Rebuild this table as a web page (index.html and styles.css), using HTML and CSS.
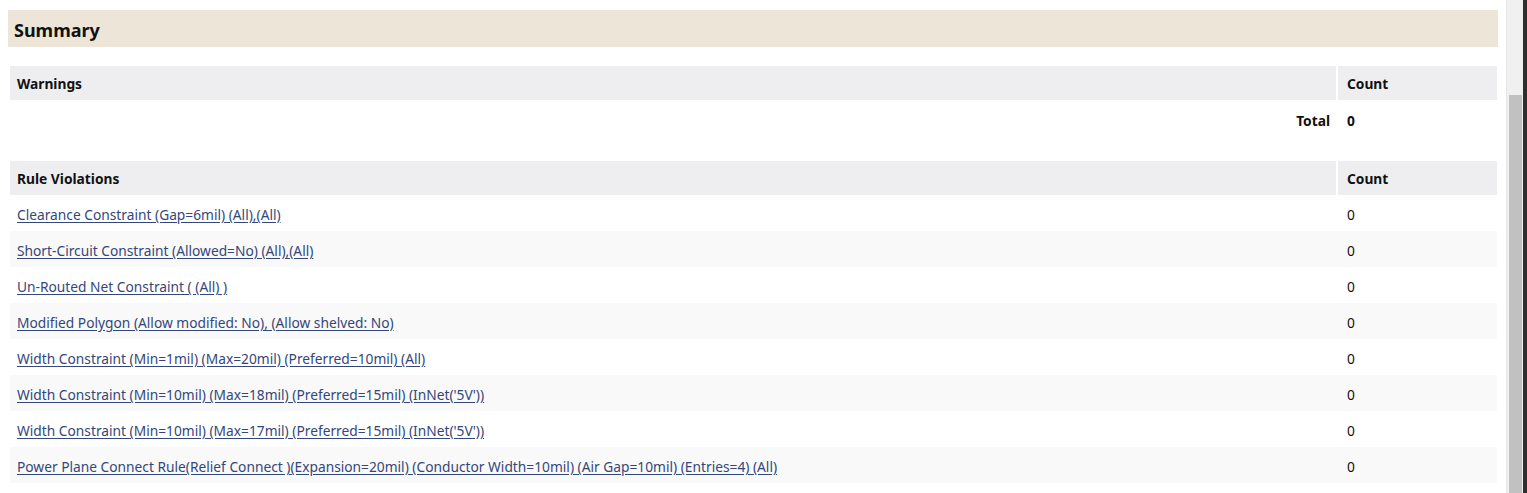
FILE: index.html
```html
<!DOCTYPE html>
<html>
<head>
<meta charset="utf-8">
<link rel="stylesheet" href="styles.css">
</head>
<body>
<div class="window">
  <main class="content">
    <h2 class="summary">Summary</h2>

    <section class="table">
      <div class="row head">
        <div class="cell">Warnings</div>
        <div class="cell count">Count</div>
      </div>
      <div class="row total">
        <div class="cell right">Total</div>
        <div class="cell count">0</div>
      </div>
    </section>

    <section class="table rules">
      <div class="row head">
        <div class="cell">Rule Violations</div>
        <div class="cell count">Count</div>
      </div>
      <div class="row item"><div class="cell"><a href="#">Clearance Constraint (Gap=6mil) (All),(All)</a></div><div class="cell count">0</div></div>
      <div class="row item alt"><div class="cell"><a href="#">Short-Circuit Constraint (Allowed=No) (All),(All)</a></div><div class="cell count">0</div></div>
      <div class="row item"><div class="cell"><a href="#">Un-Routed Net Constraint ( (All) )</a></div><div class="cell count">0</div></div>
      <div class="row item alt"><div class="cell"><a href="#">Modified Polygon (Allow modified: No), (Allow shelved: No)</a></div><div class="cell count">0</div></div>
      <div class="row item"><div class="cell"><a href="#">Width Constraint (Min=1mil) (Max=20mil) (Preferred=10mil) (All)</a></div><div class="cell count">0</div></div>
      <div class="row item alt"><div class="cell"><a href="#">Width Constraint (Min=10mil) (Max=18mil) (Preferred=15mil) (InNet('5V'))</a></div><div class="cell count">0</div></div>
      <div class="row item"><div class="cell"><a href="#">Width Constraint (Min=10mil) (Max=17mil) (Preferred=15mil) (InNet('5V'))</a></div><div class="cell count">0</div></div>
      <div class="row item alt"><div class="cell"><a href="#">Power Plane Connect Rule(Relief Connect )(Expansion=20mil) (Conductor Width=10mil) (Air Gap=10mil) (Entries=4) (All)</a></div><div class="cell count">0</div></div>
    </section>
  </main>
  <div class="scrollbar">
    <div class="scroll-space"></div>
    <div class="scroll-thumb"></div>
  </div>
  <div class="edge"></div>
</div>
</body>
</html>
```

FILE: styles.css
```css
html, body {
  margin: 0;
  padding: 0;
  height: 100%;
  overflow: hidden;
  background: #ffffff;
}

body {
  font-family: "Noto Sans", "Open Sans", "Liberation Sans", sans-serif;
  font-size: 13.75px;
  color: #111;
}

.window {
  display: flex;
  height: 493px;
  width: 1527px;
}

.content {
  flex: 1;
  padding: 10px 8px 0 8px;
  display: flex;
  flex-direction: column;
}

.summary {
  margin: 0;
  height: 37px;
  width: 1490px;
  box-sizing: border-box;
  padding-left: 6px;
  padding-top: 2px;
  display: flex;
  align-items: center;
  background: #ede5d8;
  font-size: 18px;
  font-weight: 700;
  color: #111;
}

.table {
  margin: 19px 0 0 2px;
  width: 1487px;
  display: flex;
  flex-direction: column;
}

.table.rules {
  margin-top: 21px;
}

.row {
  display: grid;
  grid-template-columns: 1fr 159px;
  column-gap: 2px;
  height: 36px;
  align-items: stretch;
}

.row .cell {
  display: flex;
  align-items: center;
  padding-left: 7px;
  white-space: nowrap;
}

.row .cell.count {
  padding-left: 9px;
}

.head {
  height: 34px;
}

.head .cell {
  background: #eeeef0;
  font-weight: 700;
  color: #111;
  padding-top: 1px;
}

.total {
  height: 40px;
}

.total .cell {
  font-weight: 700;
}

.cell.right {
  justify-content: flex-end;
  padding-right: 6px;
}

.item {
  background: #ffffff;
}

.item.alt {
  background: #f9f9f9;
}

.item .cell {
  padding-top: 2px;
}

.item a {
  color: #33477a;
  text-decoration: underline;
  text-underline-offset: 2px;
}

.scrollbar {
  width: 17px;
  background: #f0f0f0;
  border-left: 1px solid #e6e6e6;
  box-sizing: border-box;
  display: flex;
  flex-direction: column;
  padding: 0 1px 0 2px;
}

.scroll-space {
  height: 95px;
}

.scroll-thumb {
  flex: 1;
  background: #c1c1c1;
}

.edge {
  width: 4px;
  background: #2e2e2e;
}
```
